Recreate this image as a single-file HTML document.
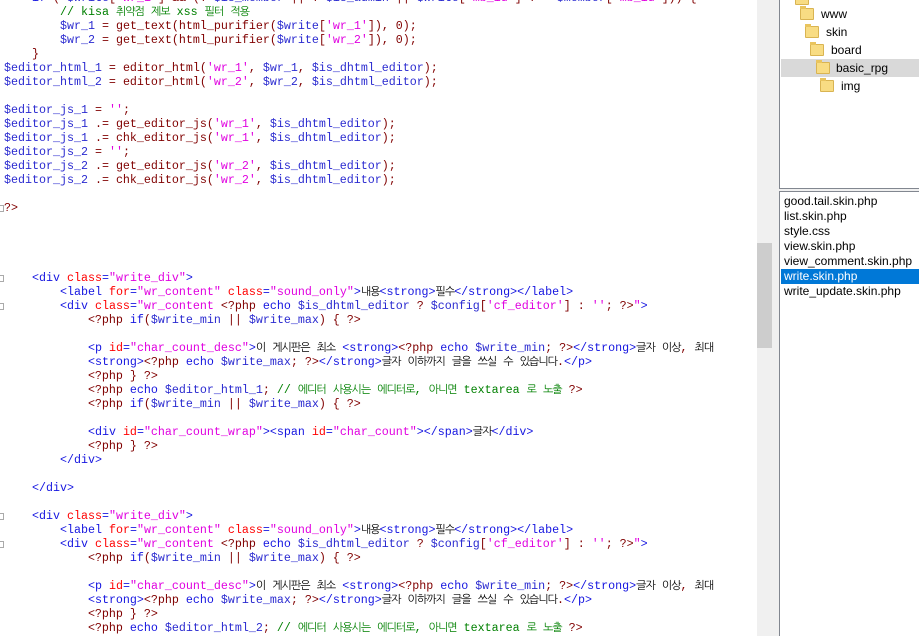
<!DOCTYPE html>
<html><head><meta charset="utf-8"><style>
*{margin:0;padding:0;box-sizing:border-box}
html{overflow:hidden;width:919px;height:636px}
body{width:919px;height:636px;overflow:hidden;background:#f0f0f0;position:relative;font-family:"Liberation Sans","Noto Sans CJK KR",sans-serif}
#code{position:absolute;left:0;top:0;width:757px;height:636px;background:#fff;overflow:hidden}
pre{position:absolute;left:4px;top:-9px;font-family:"Liberation Mono","NanumGothic","Noto Sans CJK KR",monospace;font-size:11.67px;line-height:14px;color:#800000;white-space:pre}
.v{color:#2a2ad0}.f{color:#800000}.s{color:#e000e0}.c{color:#008000}.t{color:#1515e0}.a{color:#ff0000}.k{color:#1515e0}
.h{color:#000;font-size:11px;letter-spacing:-1px;font-family:"NanumGothic","Noto Sans CJK KR",sans-serif}
.c .h{color:#008000}
.fold{position:absolute;left:0;width:4px;height:7px;border:1px solid #aaa;border-left:none}
#sb{position:absolute;left:757px;top:0;width:17px;height:636px;background:#f0f0f0}
#thumb{position:absolute;left:757px;top:243px;width:15px;height:105px;background:#cdcdcd}
#tree{position:absolute;left:779px;top:-2px;width:142px;height:191px;background:#fff;border:1px solid #828790}
#list{position:absolute;left:779px;top:191px;width:142px;height:447px;background:#fff;border:1px solid #828790}
.ti{position:absolute;font-size:12px;color:#000;line-height:16px}
.fd{position:absolute;width:14px;height:12px;background:#f8dc83;border:1px solid #d9b452;border-radius:1px}
.fd:before{content:"";position:absolute;left:-1px;top:-3px;width:6px;height:3px;background:#e9c45e}
.li{position:absolute;left:3px;font-size:12px;line-height:15px;color:#000;width:140px;padding-left:1px}
</style></head><body>
<div id="code">
<pre>    <span class="k">if</span> ( <span class="v">$write</span>[<span class="s">'wr_1'</span>] &amp;&amp; (! <span class="v">$is_member</span> || ! <span class="v">$is_admin</span> || <span class="v">$write</span>[<span class="s">'mb_id'</span>] !== <span class="v">$member</span>[<span class="s">'mb_id'</span>])) {
        <span class="c">// kisa <span class="h">취약점</span> <span class="h">제보</span> xss <span class="h">필터</span> <span class="h">적용</span></span>
        <span class="v">$wr_1</span> = <span class="f">get_text</span>(<span class="f">html_purifier</span>(<span class="v">$write</span>[<span class="s">'wr_1'</span>]), 0);
        <span class="v">$wr_2</span> = <span class="f">get_text</span>(<span class="f">html_purifier</span>(<span class="v">$write</span>[<span class="s">'wr_2'</span>]), 0);
    }
<span class="v">$editor_html_1</span> = <span class="f">editor_html</span>(<span class="s">'wr_1'</span>, <span class="v">$wr_1</span>, <span class="v">$is_dhtml_editor</span>);
<span class="v">$editor_html_2</span> = <span class="f">editor_html</span>(<span class="s">'wr_2'</span>, <span class="v">$wr_2</span>, <span class="v">$is_dhtml_editor</span>);

<span class="v">$editor_js_1</span> = <span class="s">''</span>;
<span class="v">$editor_js_1</span> .= <span class="f">get_editor_js</span>(<span class="s">'wr_1'</span>, <span class="v">$is_dhtml_editor</span>);
<span class="v">$editor_js_1</span> .= <span class="f">chk_editor_js</span>(<span class="s">'wr_1'</span>, <span class="v">$is_dhtml_editor</span>);
<span class="v">$editor_js_2</span> = <span class="s">''</span>;
<span class="v">$editor_js_2</span> .= <span class="f">get_editor_js</span>(<span class="s">'wr_2'</span>, <span class="v">$is_dhtml_editor</span>);
<span class="v">$editor_js_2</span> .= <span class="f">chk_editor_js</span>(<span class="s">'wr_2'</span>, <span class="v">$is_dhtml_editor</span>);

?&gt;




    <span class="t">&lt;div</span> <span class="a">class</span><span class="t">=</span><span class="s">"write_div"</span><span class="t">&gt;</span>
        <span class="t">&lt;label</span> <span class="a">for</span><span class="t">=</span><span class="s">"wr_content"</span> <span class="a">class</span><span class="t">=</span><span class="s">"sound_only"</span><span class="t">&gt;</span><span class="h">내용</span><span class="t">&lt;strong&gt;</span><span class="h">필수</span><span class="t">&lt;/strong&gt;&lt;/label&gt;</span>
        <span class="t">&lt;div</span> <span class="a">class</span><span class="t">=</span><span class="s">"wr_content </span>&lt;?php <span class="k">echo</span> <span class="v">$is_dhtml_editor</span> ? <span class="v">$config</span>[<span class="s">'cf_editor'</span>] : <span class="s">''</span>; ?&gt;<span class="s">"</span><span class="t">&gt;</span>
            &lt;?php <span class="k">if</span>(<span class="v">$write_min</span> || <span class="v">$write_max</span>) { ?&gt;

            <span class="t">&lt;p</span> <span class="a">id</span><span class="t">=</span><span class="s">"char_count_desc"</span><span class="t">&gt;</span><span class="h">이</span> <span class="h">게시판은</span> <span class="h">최소</span> <span class="t">&lt;strong&gt;</span>&lt;?php <span class="k">echo</span> <span class="v">$write_min</span>; ?&gt;<span class="t">&lt;/strong&gt;</span><span class="h">글자</span> <span class="h">이상</span>, <span class="h">최대</span>
            <span class="t">&lt;strong&gt;</span>&lt;?php <span class="k">echo</span> <span class="v">$write_max</span>; ?&gt;<span class="t">&lt;/strong&gt;</span><span class="h">글자</span> <span class="h">이하까지</span> <span class="h">글을</span> <span class="h">쓰실</span> <span class="h">수</span> <span class="h">있습니다</span>.<span class="t">&lt;/p&gt;</span>
            &lt;?php } ?&gt;
            &lt;?php <span class="k">echo</span> <span class="v">$editor_html_1</span>; <span class="c">// <span class="h">에디터</span> <span class="h">사용시는</span> <span class="h">에디터로</span>, <span class="h">아니면</span> textarea <span class="h">로</span> <span class="h">노출</span></span> ?&gt;
            &lt;?php <span class="k">if</span>(<span class="v">$write_min</span> || <span class="v">$write_max</span>) { ?&gt;

            <span class="t">&lt;div</span> <span class="a">id</span><span class="t">=</span><span class="s">"char_count_wrap"</span><span class="t">&gt;&lt;span</span> <span class="a">id</span><span class="t">=</span><span class="s">"char_count"</span><span class="t">&gt;&lt;/span&gt;</span><span class="h">글자</span><span class="t">&lt;/div&gt;</span>
            &lt;?php } ?&gt;
        <span class="t">&lt;/div&gt;</span>

    <span class="t">&lt;/div&gt;</span>

    <span class="t">&lt;div</span> <span class="a">class</span><span class="t">=</span><span class="s">"write_div"</span><span class="t">&gt;</span>
        <span class="t">&lt;label</span> <span class="a">for</span><span class="t">=</span><span class="s">"wr_content"</span> <span class="a">class</span><span class="t">=</span><span class="s">"sound_only"</span><span class="t">&gt;</span><span class="h">내용</span><span class="t">&lt;strong&gt;</span><span class="h">필수</span><span class="t">&lt;/strong&gt;&lt;/label&gt;</span>
        <span class="t">&lt;div</span> <span class="a">class</span><span class="t">=</span><span class="s">"wr_content </span>&lt;?php <span class="k">echo</span> <span class="v">$is_dhtml_editor</span> ? <span class="v">$config</span>[<span class="s">'cf_editor'</span>] : <span class="s">''</span>; ?&gt;<span class="s">"</span><span class="t">&gt;</span>
            &lt;?php <span class="k">if</span>(<span class="v">$write_min</span> || <span class="v">$write_max</span>) { ?&gt;

            <span class="t">&lt;p</span> <span class="a">id</span><span class="t">=</span><span class="s">"char_count_desc"</span><span class="t">&gt;</span><span class="h">이</span> <span class="h">게시판은</span> <span class="h">최소</span> <span class="t">&lt;strong&gt;</span>&lt;?php <span class="k">echo</span> <span class="v">$write_min</span>; ?&gt;<span class="t">&lt;/strong&gt;</span><span class="h">글자</span> <span class="h">이상</span>, <span class="h">최대</span>
            <span class="t">&lt;strong&gt;</span>&lt;?php <span class="k">echo</span> <span class="v">$write_max</span>; ?&gt;<span class="t">&lt;/strong&gt;</span><span class="h">글자</span> <span class="h">이하까지</span> <span class="h">글을</span> <span class="h">쓰실</span> <span class="h">수</span> <span class="h">있습니다</span>.<span class="t">&lt;/p&gt;</span>
            &lt;?php } ?&gt;
            &lt;?php <span class="k">echo</span> <span class="v">$editor_html_2</span>; <span class="c">// <span class="h">에디터</span> <span class="h">사용시는</span> <span class="h">에디터로</span>, <span class="h">아니면</span> textarea <span class="h">로</span> <span class="h">노출</span></span> ?&gt;
</pre>
<div class="fold" style="top:205px"></div>
<div class="fold" style="top:275px"></div>
<div class="fold" style="top:303px"></div>
<div class="fold" style="top:513px"></div>
<div class="fold" style="top:541px"></div>
</div>
<div id="sb"></div><div id="thumb"></div>
<div id="tree">
<div class="fd" style="left:15px;top:-6px"></div>
<div class="fd" style="left:20px;top:9px"></div><div class="ti" style="left:41px;top:7px">www</div>
<div class="fd" style="left:25px;top:27px"></div><div class="ti" style="left:46px;top:25px">skin</div>
<div class="fd" style="left:30px;top:45px"></div><div class="ti" style="left:51px;top:43px">board</div>
<div style="position:absolute;left:1px;top:60px;width:140px;height:18px;background:#d9d9d9"></div>
<div class="fd" style="left:36px;top:63px"></div><div class="ti" style="left:56px;top:61px">basic_rpg</div>
<div class="fd" style="left:40px;top:81px"></div><div class="ti" style="left:61px;top:79px">img</div>
</div>
<div id="list">
<div class="li" style="top:2px">good.tail.skin.php</div>
<div class="li" style="top:17px">list.skin.php</div>
<div class="li" style="top:32px">style.css</div>
<div class="li" style="top:47px">view.skin.php</div>
<div class="li" style="top:62px">view_comment.skin.php</div>
<div class="li" style="top:77px;left:1px;padding-left:3px;background:#0078d7;color:#fff">write.skin.php</div>
<div class="li" style="top:92px">write_update.skin.php</div>
</div>
</body></html>
